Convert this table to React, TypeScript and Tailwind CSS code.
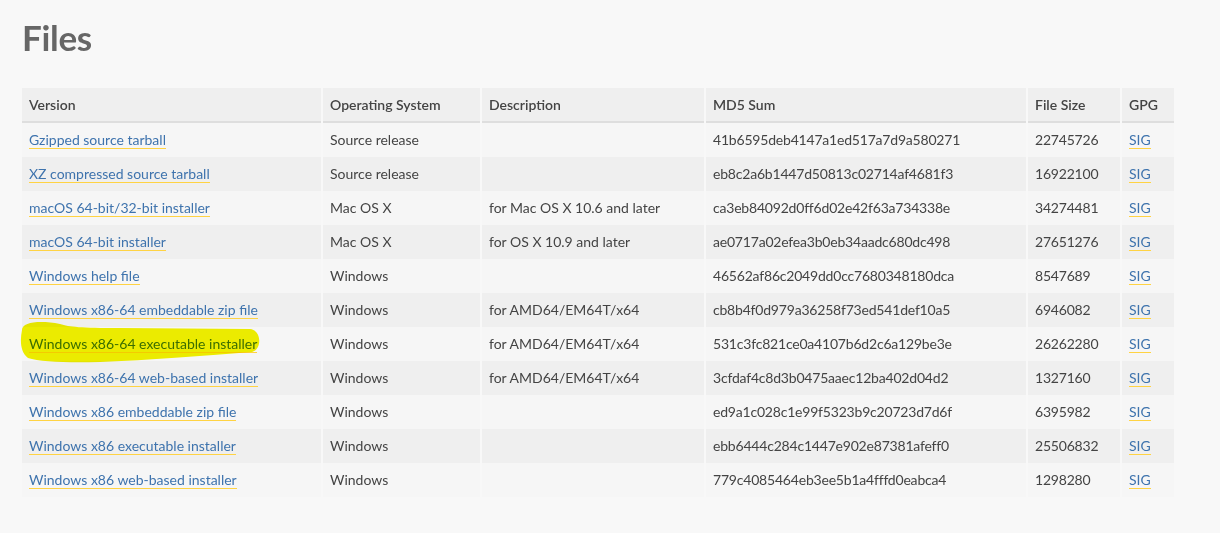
const rows = [
  ["Gzipped source tarball", "Source release", "", "41b6595deb4147a1ed517a7d9a580271", "22745726"],
  ["XZ compressed source tarball", "Source release", "", "eb8c2a6b1447d50813c02714af4681f3", "16922100"],
  ["macOS 64-bit/32-bit installer", "Mac OS X", "for Mac OS X 10.6 and later", "ca3eb84092d0ff6d02e42f63a734338e", "34274481"],
  ["macOS 64-bit installer", "Mac OS X", "for OS X 10.9 and later", "ae0717a02efea3b0eb34aadc680dc498", "27651276"],
  ["Windows help file", "Windows", "", "46562af86c2049dd0cc7680348180dca", "8547689"],
  ["Windows x86-64 embeddable zip file", "Windows", "for AMD64/EM64T/x64", "cb8b4f0d979a36258f73ed541def10a5", "6946082"],
  ["Windows x86-64 executable installer", "Windows", "for AMD64/EM64T/x64", "531c3fc821ce0a4107b6d2c6a129be3e", "26262280"],
  ["Windows x86-64 web-based installer", "Windows", "for AMD64/EM64T/x64", "3cfdaf4c8d3b0475aaec12ba402d04d2", "1327160"],
  ["Windows x86 embeddable zip file", "Windows", "", "ed9a1c028c1e99f5323b9c20723d7d6f", "6395982"],
  ["Windows x86 executable installer", "Windows", "", "ebb6444c284c1447e902e87381afeff0", "25506832"],
  ["Windows x86 web-based installer", "Windows", "", "779c4085464eb3ee5b1a4fffd0eabca4", "1298280"],
];

const cols = "grid grid-cols-[299px_157px_222px_320px_92px_52px] gap-x-[2px]";

function Link({ children }: { children: string }) {
  return <span className="text-[#3e73ad] border-b border-[#ffd343]">{children}</span>;
}

export default function App() {
  return (
    <div className="relative min-h-[533px] bg-[#f8f8f8] text-[#444] font-['Lato','Liberation_Sans',sans-serif] text-[14px]">
      <div className="pl-[22px] pt-[14px]">
        <h1 className="text-[35px] font-bold text-[#666] leading-[46px] tracking-[-0.3px]">Files</h1>
        <div className={`mt-[28px] w-[1152px] ${cols}`}>
          {["Version", "Operating System", "Description", "MD5 Sum", "File Size", "GPG"].map((h) => (
            <div key={h} className="bg-[#efefef] h-[35px] leading-[33px] border-b-2 border-[#dedede] px-[7px] font-semibold text-[#444]">
              {h}
            </div>
          ))}
          {rows.map((r, i) => {
            const bg = i % 2 === 0 ? "bg-[#f6f6f6]" : "bg-[#efefef]";
            const cell = `${bg} h-[34px] leading-[33px] px-[7px] whitespace-nowrap`;
            return [
              <div key={i + "a"} className={cell}><Link>{r[0]}</Link></div>,
              <div key={i + "b"} className={cell}>{r[1]}</div>,
              <div key={i + "c"} className={cell}>{r[2]}</div>,
              <div key={i + "d"} className={`${cell} tracking-[-0.2px]`}>{r[3]}</div>,
              <div key={i + "e"} className={`${cell} tracking-[-0.2px]`}>{r[4]}</div>,
              <div key={i + "f"} className={cell}><Link>SIG</Link></div>,
            ];
          })}
        </div>
      </div>
      <svg className="absolute left-0 top-0 pointer-events-none mix-blend-multiply" width="300" height="400">
        <path
          d="M22,330 C22,322 40,320 60,324 C70,327 80,328 120,328 L250,329 C262,330 262,350 252,352 C200,356 150,360 100,362 C70,363 40,362 28,358 C20,352 20,340 22,330 Z"
          fill="#f4f400"
        />
      </svg>
    </div>
  );
}
